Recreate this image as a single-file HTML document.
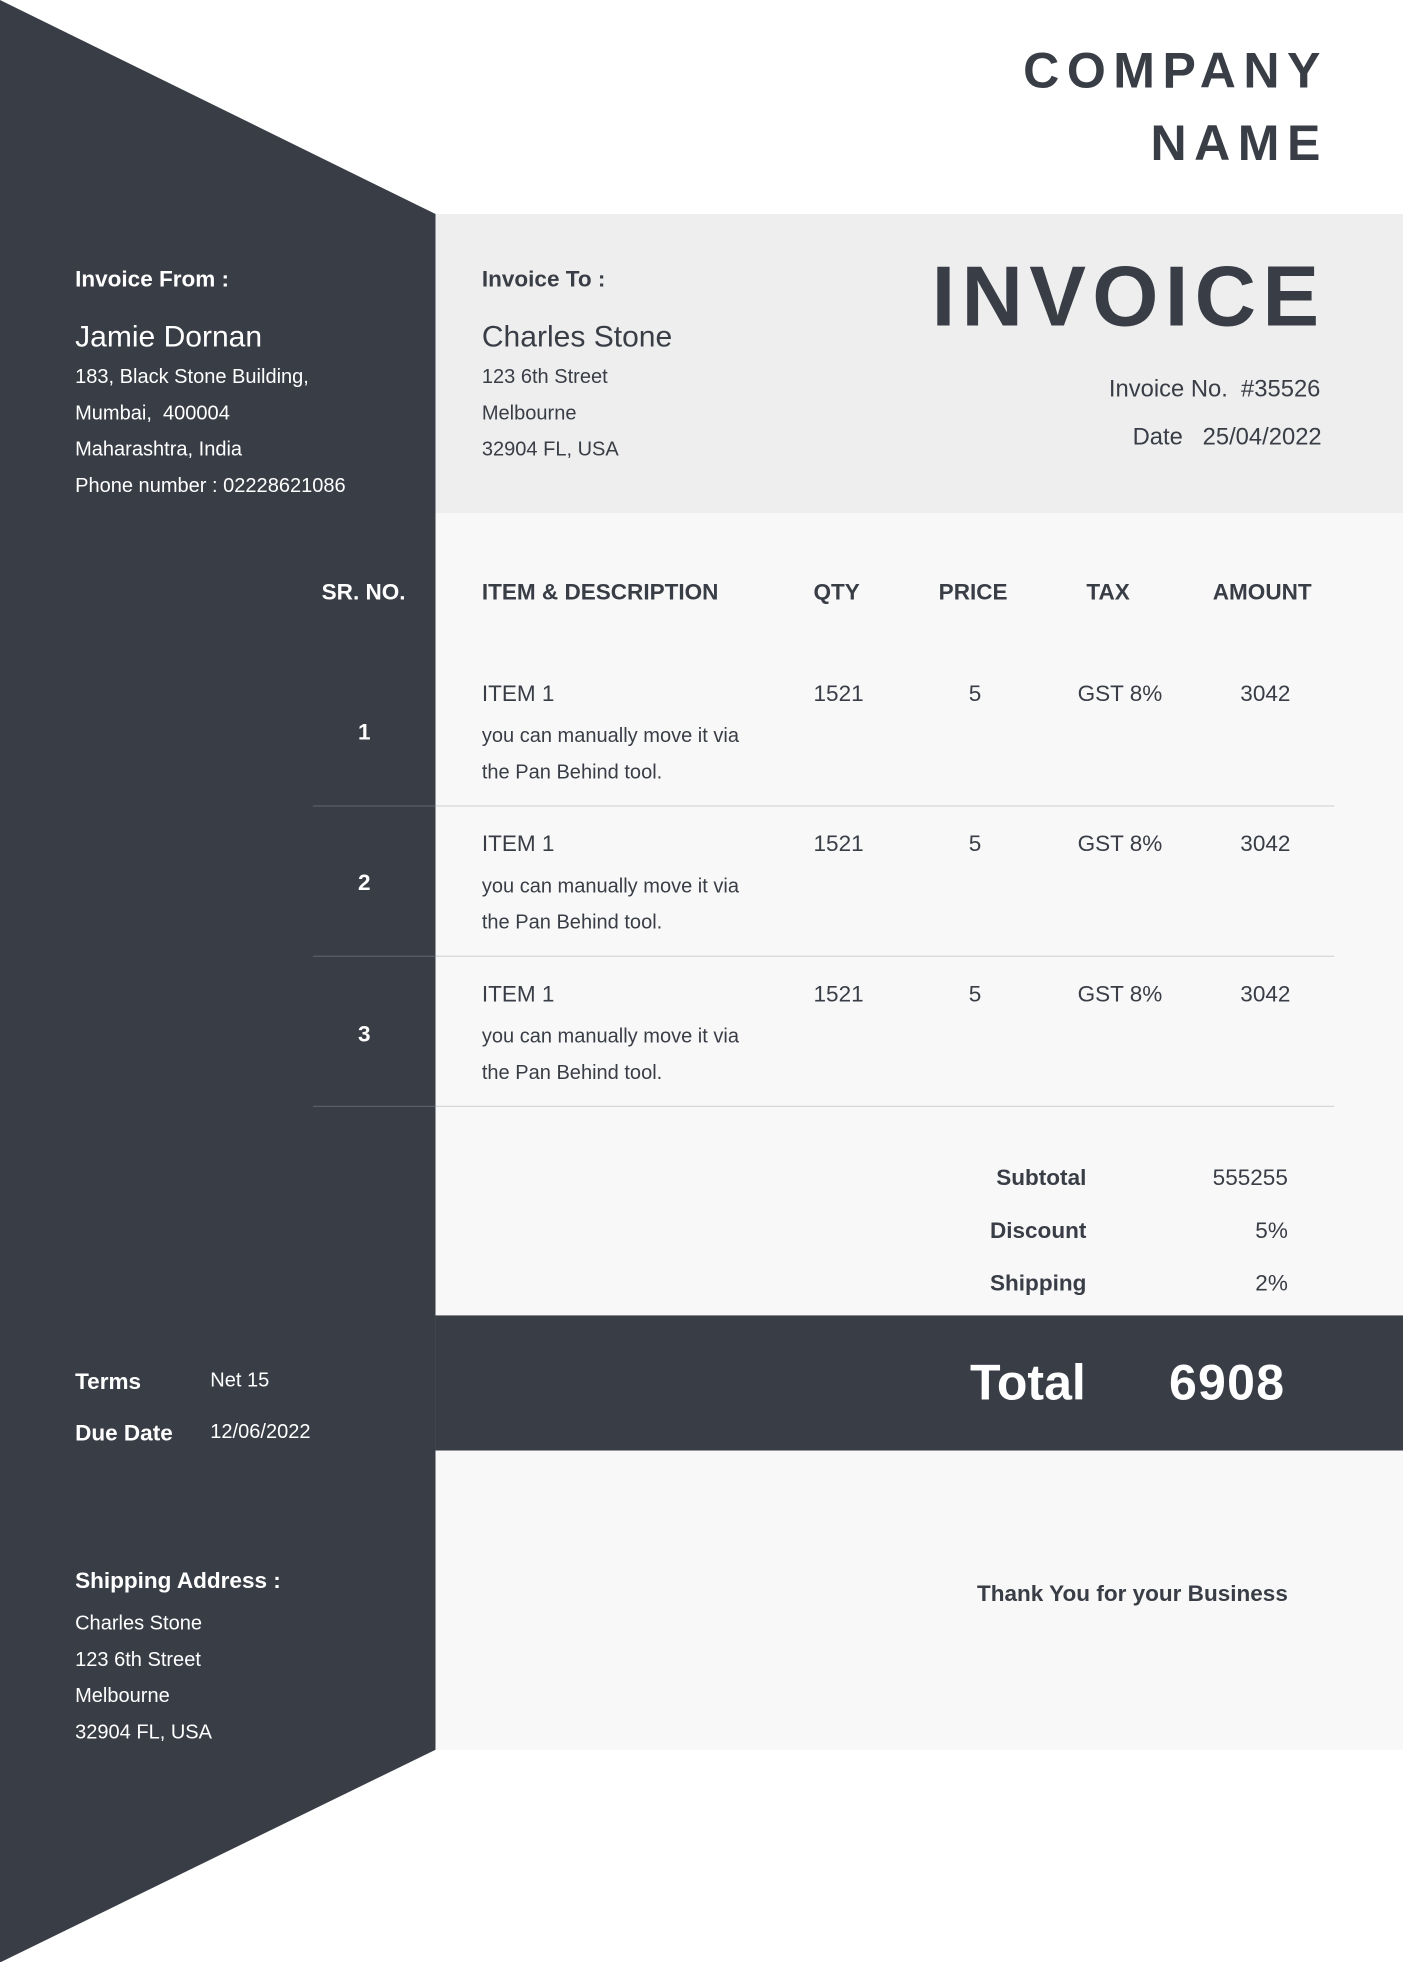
<!DOCTYPE html>
<html><head><meta charset="utf-8"><style>
html,body{margin:0;padding:0;background:#fff;width:1403px;height:1962px;overflow:hidden}
#w{position:absolute;left:0;top:0;width:1121px;height:1568px;transform:scale(1.25157);transform-origin:0 0;font-family:"Liberation Sans",sans-serif;color:#393d46}
.a{position:absolute;white-space:nowrap}
.wh{color:#fff}
.b{font-weight:bold}
.r{text-align:right}
</style></head><body><div id="w">
<svg class="a" style="left:0;top:0" width="1121" height="1568"><polygon points="0,0 348,171 348,1398 0,1568" fill="#393d46"/>
<rect x="348" y="171" width="773" height="239" fill="#eeeeee"/>
<rect x="348" y="410" width="773" height="641" fill="#f8f8f8"/>
<rect x="348" y="1051" width="773" height="108" fill="#393d46"/>
<rect x="348" y="1159" width="773" height="239" fill="#f8f8f8"/>
<g stroke="#d4d6d9" stroke-width="1"><line x1="348" y1="644" x2="1066" y2="644"/><line x1="348" y1="764" x2="1066" y2="764"/><line x1="348" y1="884" x2="1066" y2="884"/></g>
<g stroke="#5a5e66" stroke-width="1"><line x1="250" y1="644" x2="348" y2="644"/><line x1="250" y1="764" x2="348" y2="764"/><line x1="250" y1="884" x2="348" y2="884"/></g>
</svg>
<div class="a b r" style="right:60px;top:28px;font-size:40px;letter-spacing:6px;line-height:58px">COMPANY<br>NAME</div>
<div class="a b r" style="right:62px;top:198px;font-size:68px;letter-spacing:5px">INVOICE</div>
<div class="a r" style="right:66px;top:301px;font-size:19px">Invoice No.&nbsp; #35526</div>
<div class="a r" style="right:65px;top:339px;font-size:19px">Date&nbsp;&nbsp; 25/04/2022</div>

<div class="a wh b" style="left:60px;top:213px;font-size:18px">Invoice From :</div>
<div class="a wh" style="left:60px;top:256px;font-size:24px">Jamie Dornan</div>
<div class="a wh" style="left:60px;top:287px;font-size:16px;line-height:29px">183, Black Stone Building,<br>Mumbai,&nbsp; 400004<br>Maharashtra, India<br>Phone number : 02228621086</div>

<div class="a b" style="left:385px;top:213px;font-size:18px">Invoice To :</div>
<div class="a" style="left:385px;top:256px;font-size:24px">Charles Stone</div>
<div class="a" style="left:385px;top:287px;font-size:16px;line-height:29px">123 6th Street<br>Melbourne<br>32904 FL, USA</div>

<div class="a wh b" style="left:257px;top:463px;font-size:18px">SR. NO.</div>
<div class="a b" style="left:385px;top:463px;font-size:18px">ITEM &amp; DESCRIPTION</div>
<div class="a b" style="left:650px;top:463px;font-size:18px">QTY</div>
<div class="a b" style="left:750px;top:463px;font-size:18px">PRICE</div>
<div class="a b" style="left:868px;top:463px;font-size:18px">TAX</div>
<div class="a b" style="left:969px;top:463px;font-size:18px">AMOUNT</div>

<div class="a wh b" style="left:286px;top:575px;font-size:18px">1</div>
<div class="a wh b" style="left:286px;top:695px;font-size:18px">2</div>
<div class="a wh b" style="left:286px;top:816px;font-size:18px">3</div>

<div class="a" style="left:385px;top:544px;font-size:18px">ITEM 1</div>
<div class="a" style="left:385px;top:574px;font-size:16px;line-height:29px">you can manually move it via<br>the Pan Behind tool.</div>
<div class="a" style="left:650px;top:544px;font-size:18px">1521</div>
<div class="a" style="left:774px;top:544px;font-size:18px">5</div>
<div class="a" style="left:861px;top:544px;font-size:18px">GST 8%</div>
<div class="a" style="left:991px;top:544px;font-size:18px">3042</div>

<div class="a" style="left:385px;top:664px;font-size:18px">ITEM 1</div>
<div class="a" style="left:385px;top:694px;font-size:16px;line-height:29px">you can manually move it via<br>the Pan Behind tool.</div>
<div class="a" style="left:650px;top:664px;font-size:18px">1521</div>
<div class="a" style="left:774px;top:664px;font-size:18px">5</div>
<div class="a" style="left:861px;top:664px;font-size:18px">GST 8%</div>
<div class="a" style="left:991px;top:664px;font-size:18px">3042</div>

<div class="a" style="left:385px;top:784px;font-size:18px">ITEM 1</div>
<div class="a" style="left:385px;top:814px;font-size:16px;line-height:29px">you can manually move it via<br>the Pan Behind tool.</div>
<div class="a" style="left:650px;top:784px;font-size:18px">1521</div>
<div class="a" style="left:774px;top:784px;font-size:18px">5</div>
<div class="a" style="left:861px;top:784px;font-size:18px">GST 8%</div>
<div class="a" style="left:991px;top:784px;font-size:18px">3042</div>

<div class="a b r" style="right:253px;top:931px;font-size:18px">Subtotal</div>
<div class="a r" style="right:92px;top:931px;font-size:18px">555255</div>
<div class="a b r" style="right:253px;top:973px;font-size:18px">Discount</div>
<div class="a r" style="right:92px;top:973px;font-size:18px">5%</div>
<div class="a b r" style="right:253px;top:1015px;font-size:18px">Shipping</div>
<div class="a r" style="right:92px;top:1015px;font-size:18px">2%</div>

<div class="a wh b" style="left:775px;top:1083px;font-size:40px">Total</div>
<div class="a wh b" style="left:934px;top:1083px;font-size:40px;letter-spacing:1px">6908</div>

<div class="a wh b" style="left:60px;top:1094px;font-size:18px">Terms</div>
<div class="a wh" style="left:168px;top:1095px;font-size:16px">Net 15</div>
<div class="a wh b" style="left:60px;top:1135px;font-size:18px">Due Date</div>
<div class="a wh" style="left:168px;top:1136px;font-size:16px">12/06/2022</div>

<div class="a wh b" style="left:60px;top:1253px;font-size:18px">Shipping Address :</div>
<div class="a wh" style="left:60px;top:1283px;font-size:16px;line-height:29px">Charles Stone<br>123 6th Street<br>Melbourne<br>32904 FL, USA</div>

<div class="a b r" style="right:92px;top:1263px;font-size:18px">Thank You for your Business</div>
</div></body></html>
